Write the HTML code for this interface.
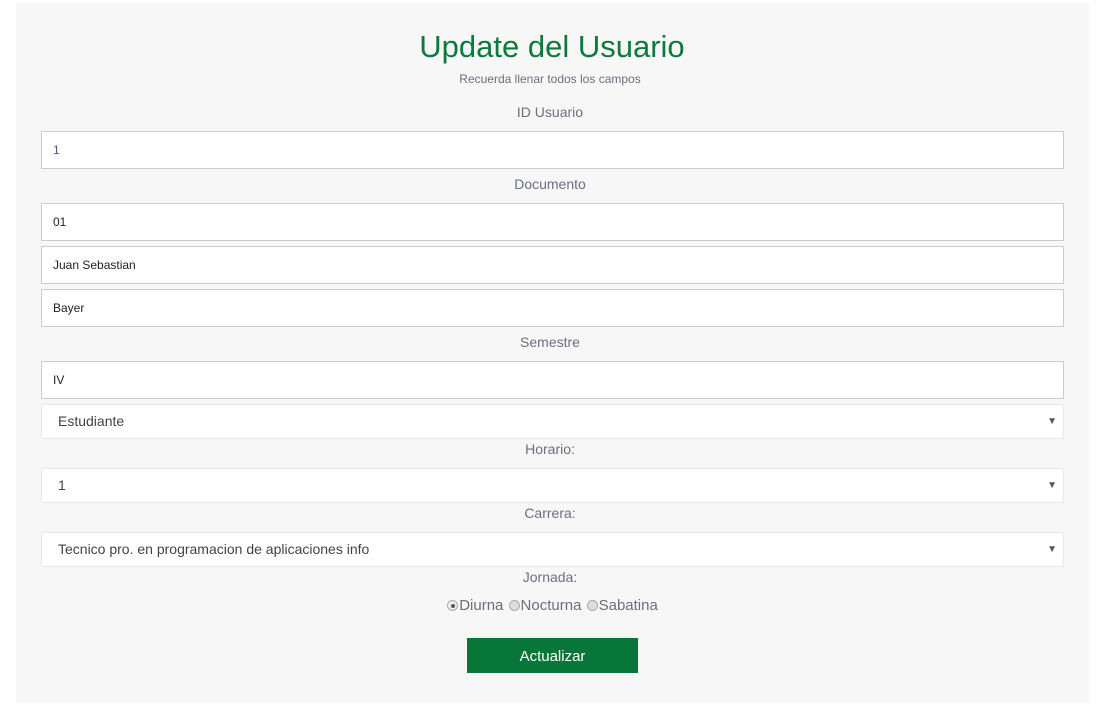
<!DOCTYPE html><html><head><style>
body{margin:0;width:1100px;height:716px;background:#fff;font-family:"Liberation Sans",sans-serif;position:relative;overflow:hidden}
.c{position:absolute;left:16px;top:3px;width:1073px;height:700px;background:#f7f7f7}
.a{position:absolute}
.lbl{position:absolute;left:0;width:1100px;text-align:center;color:#6b6f80;font-size:14px}
.in{position:absolute;left:41px;width:1021px;height:36px;background:#fff;border:1px solid #ccc;font-size:12px;color:#222;line-height:36px;box-sizing:content-box}
.in span{position:absolute;left:11px}
.sel{position:absolute;left:41px;width:1021px;height:33px;background:#fff;border:1px solid #e8e8e8;border-radius:2px;font-size:14px;color:#444;line-height:33px}
.sel span{position:absolute;left:16px}
.sel i{position:absolute;right:6px;top:0;font-style:normal;font-size:10px;color:#555}
.r{display:inline-block;width:11px;height:11px;border-radius:50%;border:1px solid #aaa;background:#ddd;vertical-align:-1px;box-sizing:border-box;position:relative;margin:0 1px}
</style></head><body>
<div class="c"></div>
<div class="lbl" style="top:29px;font-size:31px;color:#0b7a3b;left:2px">Update del Usuario</div>
<div class="lbl" style="top:72px;font-size:12px">Recuerda llenar todos los campos</div>
<div class="lbl" style="top:104px">ID Usuario</div>
<div class="in" style="top:131px;color:#557"><span>1</span></div>
<div class="lbl" style="top:176px">Documento</div>
<div class="in" style="top:203px"><span>01</span></div>
<div class="in" style="top:246px"><span>Juan Sebastian</span></div>
<div class="in" style="top:289px"><span>Bayer</span></div>
<div class="lbl" style="top:334px">Semestre</div>
<div class="in" style="top:361px"><span>IV</span></div>
<div class="sel" style="top:404px"><span>Estudiante</span><i>▼</i></div>
<div class="lbl" style="top:441px">Horario:</div>
<div class="sel" style="top:468px"><span>1</span><i>▼</i></div>
<div class="lbl" style="top:505px">Carrera:</div>
<div class="sel" style="top:532px"><span>Tecnico pro. en programacion de aplicaciones info</span><i>▼</i></div>
<div class="lbl" style="top:569px">Jornada:</div>
<div class="lbl" style="top:597px;left:2px;font-size:15px"><span class="r" style="background:#eee"><span style="position:absolute;left:2.5px;top:2.5px;width:4px;height:4px;border-radius:50%;background:#555"></span></span>Diurna <span class="r"></span>Nocturna <span class="r"></span>Sabatina</div>
<div class="a" style="left:467px;top:638px;width:171px;height:35px;background:#077638;color:#fff;font-size:15px;text-align:center;line-height:38px">Actualizar</div>
</body></html>
